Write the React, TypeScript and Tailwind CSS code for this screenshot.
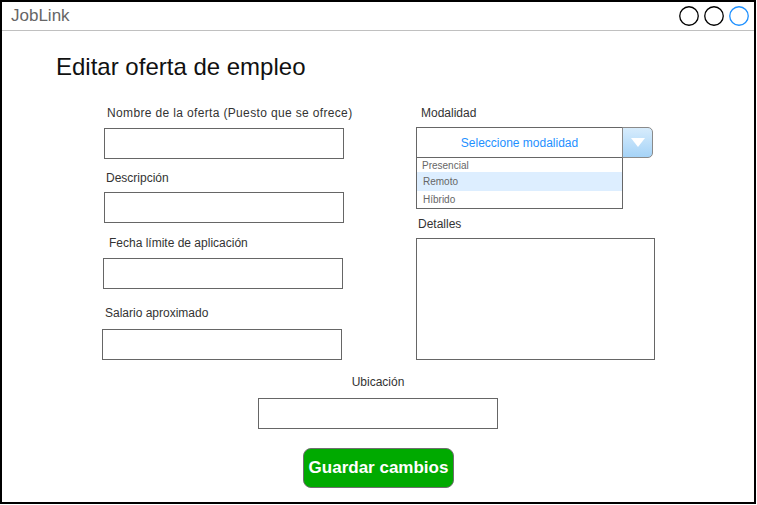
import React from 'react';

const font = { fontFamily: '"Liberation Sans", Arial, Helvetica, sans-serif' };

function Label({ text, className }: { text: string; className?: string }) {
  return <div className={`text-[12px] leading-[14px] text-[#333333] whitespace-nowrap ${className ?? ''}`}>{text}</div>;
}

function Field({ className }: { className?: string }) {
  return <div className={`w-[240px] h-[31px] border border-[#666666] bg-white ${className ?? ''}`} />;
}

function WindowControls() {
  return (
    <svg width="72" height="22" viewBox="0 0 72 22" className="block">
      <circle cx="10" cy="11" r="9.25" fill="white" stroke="#000" strokeWidth="1.3" />
      <circle cx="35" cy="11" r="9.25" fill="white" stroke="#000" strokeWidth="1.3" />
      <circle cx="60" cy="11" r="9.25" fill="white" stroke="#1e90ff" strokeWidth="1.3" />
    </svg>
  );
}

function ModalidadSelect() {
  const options = ['Presencial', 'Remoto', 'Híbrido'];
  return (
    <div className="mt-[7px] w-[238px]">
      <div className="flex">
        <div className="w-[207px] h-[31px] border border-[#666666] flex items-center justify-center text-[12px] text-[#1e90ff]">
          Seleccione modalidad
        </div>
        <div className="ml-[-1px] w-[31px] h-[31px] border border-[#8a8a8a] rounded-r-[5px] bg-gradient-to-b from-[#d7ecfc] to-[#a5d3f7] flex items-center justify-center">
          <svg width="14" height="9" viewBox="0 0 14 9">
            <polygon points="0,0 14,0 7,9" fill="white" />
          </svg>
        </div>
      </div>
      <div className="w-[207px] border border-t-0 border-[#666666] text-[10px] text-[#666666]">
        <div className="h-[14px] leading-[15px] pl-[5px]">{options[0]}</div>
        <div className="h-[19px] leading-[19px] pl-[6px] bg-[#ddeeff]">{options[1]}</div>
        <div className="h-[17px] leading-[17px] pl-[6px]">{options[2]}</div>
      </div>
    </div>
  );
}

export default function App() {
  return (
    <div style={font} className="w-[756px] h-[504px] border-2 border-black bg-white flex flex-col overflow-hidden">
      <header className="h-[29px] border-b border-[#c0c0c0] flex items-center justify-between pl-[9px] pr-[3px] shrink-0">
        <span className="text-[17px] leading-[20px] text-[#666666]">JobLink</span>
        <WindowControls />
      </header>

      <main className="flex flex-col">
        <h1 className="ml-[54px] mt-[22px] text-[24px] leading-[28px] text-[#111111]">Editar oferta de empleo</h1>

        <div className="flex">
          {/* columna izquierda */}
          <div className="ml-[100px] w-[314px] flex flex-col">
            <Label text="Nombre de la oferta (Puesto que se ofrece)" className="ml-[5px] mt-[25px] tracking-[0.35px]" />
            <Field className="ml-[2px] mt-[8px]" />
            <Label text="Descripción" className="ml-[4px] mt-[12px]" />
            <Field className="ml-[2px] mt-[7px]" />
            <Label text="Fecha límite de aplicación" className="ml-[7px] mt-[13px]" />
            <Field className="ml-[1px] mt-[8px]" />
            <Label text="Salario aproximado" className="ml-[3px] mt-[17px]" />
            <Field className="mt-[9px]" />
          </div>

          {/* columna derecha */}
          <div className="flex flex-col">
            <Label text="Modalidad" className="ml-[5px] mt-[25px]" />
            <ModalidadSelect />
            <Label text="Detalles" className="ml-[2px] mt-[8px]" />
            <div className="mt-[7px] w-[239px] h-[122px] border border-[#666666]" />
          </div>
        </div>

        <div className="ml-[256px] w-[240px] flex flex-col">
          <Label text="Ubicación" className="mt-[15px] text-center" />
          <Field className="mt-[9px]" />
        </div>

        <button className="ml-[301px] mt-[19px] w-[151px] h-[40px] rounded-[8px] border border-[#6f6f6f] bg-[#00aa00] text-white font-bold text-[17px] leading-[20px]">
          Guardar cambios
        </button>
      </main>
    </div>
  );
}
